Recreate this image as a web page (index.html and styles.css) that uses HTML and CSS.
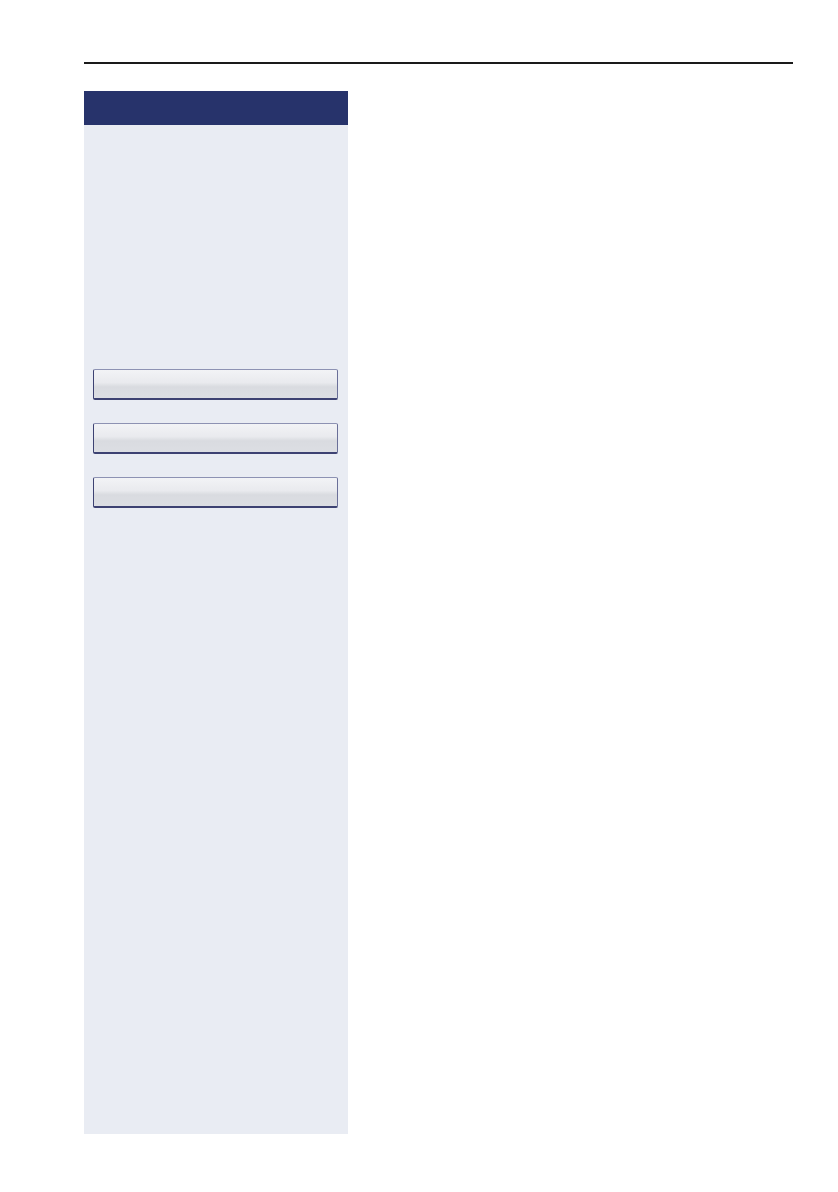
FILE: index.html
```html
<!DOCTYPE html>
<html lang="en">
<head>
<meta charset="utf-8">
<title>Page</title>
<link rel="stylesheet" href="styles.css">
</head>
<body>
<div class="page">
  <div class="rule"></div>
  <div class="panel">
    <div class="panel-head"></div>
    <div class="panel-body">
      <div class="btn"></div>
      <div class="btn"></div>
      <div class="btn"></div>
    </div>
  </div>
</div>
</body>
</html>
```
FILE: styles.css
```css
html, body {
  margin: 0;
  padding: 0;
  background: #ffffff;
  font-family: "Liberation Sans", Arial, sans-serif;
}
.page {
  width: 838px;
  height: 1192px;
  padding: 62px 0 0 84px;
  box-sizing: border-box;
}
.rule {
  width: 709px;
  height: 2px;
  background: #1a1a1a;
}
.panel {
  margin-top: 27px;
  width: 264px;
  height: 1043px;
  background: #e9ecf3;
  display: flex;
  flex-direction: column;
}
.panel-head {
  height: 34px;
  background: #27336b;
}
.panel-body {
  padding: 244px 10px 0 9px;
  display: flex;
  flex-direction: column;
  gap: 23px;
}
.btn {
  height: 31px;
  box-sizing: border-box;
  border: 1px solid #8d92b3;
  border-left-color: #3d4272;
  border-bottom: 2px solid #3d4272;
  border-right-color: #6a6f98;
  border-radius: 2px;
  background: linear-gradient(to bottom, #f2f3f6 0%, #e9eaee 45%, #d9dbe0 60%, #dcdee3 100%);
}
```
